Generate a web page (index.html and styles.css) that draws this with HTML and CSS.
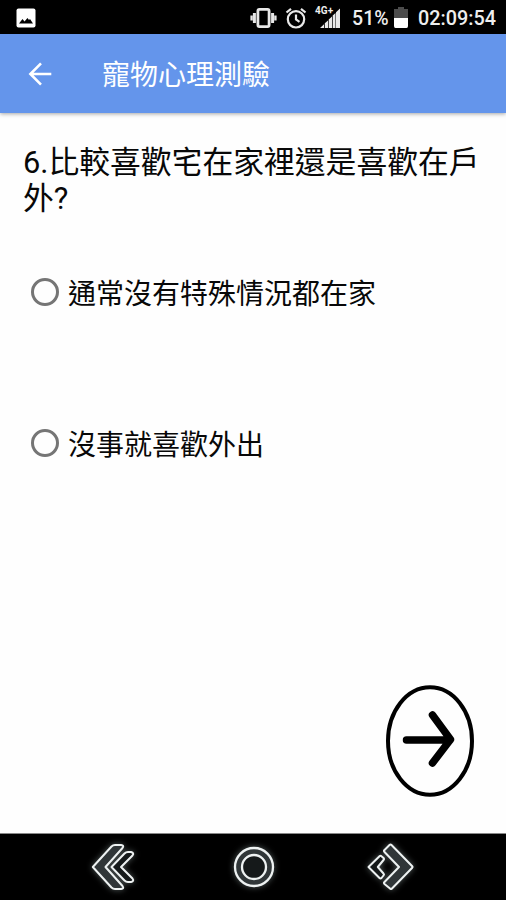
FILE: index.html
```html
<!DOCTYPE html>
<html lang="zh-Hant">
<head>
    <meta charset="UTF-8">
    <meta name="viewport" content="width=device-width, initial-scale=1.0">
    <title>寵物心理測驗</title>
    <link rel="stylesheet" href="styles.css">
</head>
<body>
    <div class="screen">
        <!-- Status bar -->
        <div class="status-bar">
            <svg class="icon-picture" width="20" height="20" viewBox="0 0 20 20">
                <rect x="0.5" y="0.5" width="19" height="19" rx="2" fill="#fff"/>
                <path d="M3 15.5 6.5 11 8.5 13.5 11.5 10 13 12 14 11 17 15.5Z" fill="#000"/>
            </svg>
            <div class="status-right">
                <svg class="icon-vibrate" width="27" height="20" viewBox="0 0 27 20">
                    <rect x="7.9" y="1.4" width="11.2" height="17.2" rx="1.5" fill="#000" stroke="#e8e8e8" stroke-width="2.8"/>
                    <path d="M4.4 5V15M22.6 5V15" stroke="#e8e8e8" stroke-width="3"/>
                    <path d="M1.6 7.5V12.5M25.4 7.5V12.5" stroke="#e8e8e8" stroke-width="2.4"/>
                </svg>
                <svg class="icon-alarm" width="22" height="22" viewBox="0 0 22 22" fill="none" stroke="#e8e8e8" stroke-width="2.2">
                    <circle cx="11" cy="12.3" r="8.2"/>
                    <path d="M11 7.5V12.5L14.5 14.8M1.5 5.5 6 1.8M20.5 5.5 16 1.8"/>
                </svg>
                <div class="signal">
                    <svg width="26" height="22" viewBox="0 0 26 22" fill="#e8e8e8">
                        <path d="M5 21 9 17.2V21ZM9.8 16.3 13 13.5V21H9.8ZM13.7 12.5 17 9.5V21H13.7ZM17.7 8.5 20.5 6V21H17.7ZM21 5.2 25 1.5V21H21Z"/>
                    </svg>
                    <span class="signal-label">4G+</span>
                </div>
                <span class="battery-text">51%</span>
                <svg class="icon-battery" width="14" height="21" viewBox="0 0 14 21">
                    <path d="M4 0H10V2H14V11H0V2H4Z" fill="#4c4c4c"/>
                    <path d="M0 11H14V19Q14 21 12.5 21H1.5Q0 21 0 19Z" fill="#fff"/>
                </svg>
                <span class="clock">02:09:54</span>
            </div>
        </div>

        <!-- App bar -->
        <header class="app-bar">
            <svg class="back-arrow" width="24" height="24" viewBox="0 0 24 24" fill="none" stroke="#fff" stroke-width="2.6">
                <path d="M23.3 12H2.5M13 1.4 2.4 12 13 22.6"/>
            </svg>
            <h1 class="app-title">寵物心理測驗</h1>
        </header>

        <main class="content">
            <p class="question">6.比較喜歡宅在家裡還是喜歡在戶外?</p>

            <div class="options">
                <label class="option">
                    <input type="radio" name="answer" value="home">
                    <span>通常沒有特殊情況都在家</span>
                </label>
                <label class="option">
                    <input type="radio" name="answer" value="outside">
                    <span>沒事就喜歡外出</span>
                </label>
            </div>

            <button class="next-btn" aria-label="下一題">
                <svg width="88" height="112" viewBox="0 0 88 112" fill="none" stroke="#000">
                    <ellipse cx="44" cy="56" rx="42" ry="53.8" stroke-width="4"/>
                    <path d="M20.5 55H64M46.5 30 64.5 54.5 46.5 78" stroke-width="7.5" stroke-linecap="round" stroke-linejoin="round"/>
                </svg>
            </button>
        </main>

        <!-- System navigation -->
        <nav class="nav-bar">
            <svg width="44" height="48" viewBox="0 0 44 48" fill="#303638" stroke="#eef2f2" stroke-width="2" stroke-linejoin="round">
                <path d="M1.8 24 20.5 3.5Q22 2 24 2H30Q33.5 2.5 31.5 5L14.5 24 31.5 43Q33.5 45.5 30 46H24Q22 46 20.5 44.5Z"/>
                <path d="M20.5 24 33.5 10.5Q35 9 37 9H40Q43.5 10 41.5 12.5L30 24 41.5 35.5Q43.5 38 40 39H37Q35 39 33.5 37.5Z" fill="#15191a"/>
            </svg>
            <svg width="44" height="44" viewBox="0 0 44 44" fill="none">
                <circle cx="22" cy="22" r="16.2" stroke="#303638" stroke-width="7"/>
                <circle cx="22" cy="22" r="19" stroke="#eef2f2" stroke-width="2.3"/>
                <circle cx="22" cy="22" r="12" fill="#15191a" stroke="#eef2f2" stroke-width="2.3"/>
            </svg>
            <svg width="48" height="48" viewBox="0 0 48 48" fill="#303638" stroke="#eef2f2" stroke-width="2" stroke-linejoin="round">
                <path d="M22.5 2Q23.5 1 24.5 2L45 23Q46 24 45 25L25 45.5Q24 46.5 23 45.5L17.5 41Q16.5 40 17.5 39L32 24 17.5 9Q16.5 8 17.5 7Z"/>
                <path d="M12.5 13.2Q13.5 12.2 14.5 13.2L16.5 15Q17.5 16 16.5 17L10.8 24 16.5 30.5Q17.5 31.5 16.5 32.5L14.5 35Q13.5 36 12.5 35L1.5 24Z" fill="#15191a"/>
            </svg>
        </nav>
    </div>
</body>
</html>
```
FILE: styles.css
```css
* {
    margin: 0;
    padding: 0;
    box-sizing: border-box;
}

body {
    background-color: #fefefe;
    color: #080808;
    font-family: Roboto, "Noto Sans CJK TC", sans-serif;
}

.screen {
    width: 506px;
    height: 900px;
    display: flex;
    flex-direction: column;
    overflow: hidden;
}

/* Status bar */
.status-bar {
    height: 34px;
    flex-shrink: 0;
    display: flex;
    align-items: center;
    justify-content: space-between;
    padding: 1px 10px 0 16px;
    background-color: #000;
    color: #eee;
}

.status-right {
    display: flex;
    align-items: center;
}

.icon-alarm {
    margin-left: 8px;
}

.signal {
    position: relative;
    height: 22px;
    margin-left: 8px;
}

.signal-label {
    position: absolute;
    top: -1px;
    left: 0;
    font-size: 10px;
    font-weight: 700;
    line-height: 10px;
}

.battery-text {
    width: 38px;
    margin-left: 11px;
    padding-top: 2px;
    font-size: 19.5px;
    font-weight: 500;
}

.icon-battery {
    margin-left: 4px;
}

.clock {
    margin-left: 10px;
    padding-top: 2px;
    font-size: 19.8px;
    font-weight: 500;
}

/* App bar */
.app-bar {
    height: 79px;
    flex-shrink: 0;
    display: flex;
    align-items: center;
    padding-left: 28px;
    background-color: #6495eb;
    box-shadow: 0 1px 4px rgba(0, 0, 0, 0.35);
    color: #fff;
}

.app-title {
    margin-left: 50px;
    padding-top: 5px;
    font-size: 28px;
    font-weight: 400;
    line-height: 40px;
}

/* Question */
.content {
    flex: 1;
    display: flex;
    flex-direction: column;
    padding: 32px 23px 36px;
}

.question {
    font-size: 30.8px;
    line-height: 36px;
}

.options {
    display: flex;
    flex-direction: column;
    gap: 111px;
    margin-top: 55px;
    padding-left: 8px;
}

.option {
    height: 40px;
    display: flex;
    align-items: center;
    gap: 9px;
    font-size: 28px;
    line-height: 40px;
}

.option span {
    padding-top: 6px;
}

.option input {
    appearance: none;
    width: 28px;
    height: 28px;
    border: 3px solid #757575;
    border-radius: 50%;
}

.option input:checked {
    background: radial-gradient(#6495eb 45%, transparent 50%);
}

.next-btn {
    margin-top: auto;
    margin-right: 9px;
    align-self: flex-end;
    border: none;
    background: none;
    cursor: pointer;
}

.next-btn svg {
    display: block;
}

/* Navigation bar */
.nav-bar {
    height: 67px;
    flex-shrink: 0;
    display: flex;
    align-items: center;
    gap: 97px;
    padding-left: 91px;
    border-top: 1px solid #888;
    background-color: #000;
}

.nav-bar svg {
    filter: drop-shadow(0 0 3px rgba(200, 220, 220, 0.4));
}

.nav-bar svg:last-child {
    margin-left: -6px;
}
```
